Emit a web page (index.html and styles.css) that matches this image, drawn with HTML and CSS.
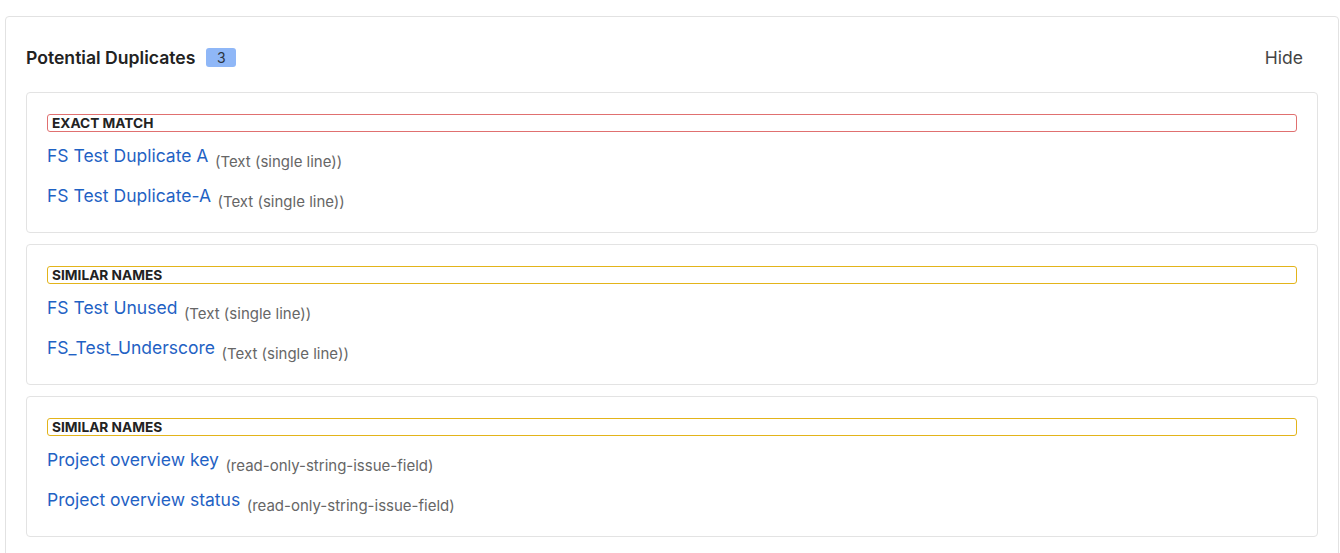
FILE: index.html
```html
<!DOCTYPE html>
<html lang="en">
	<head>
		<meta charset="UTF-8" />
		<meta name="viewport" content="width=device-width, initial-scale=1.0" />
		<title>Potential Duplicates</title>
		<link rel="stylesheet" href="styles.css">
	</head>
	<body>
		<div class="panel">
			<div class="panel-header">
				<div class="panel-title">
					<h2>Potential Duplicates</h2>
					<span class="count">3</span>
				</div>
				<a class="hide-link" href="#">Hide</a>
			</div>

			<div class="group">
				<div class="group-label exact">EXACT MATCH</div>
				<div class="field-row">
					<a href="#">FS Test Duplicate A</a>
					<span class="field-type">(Text (single line))</span>
				</div>
				<div class="field-row">
					<a href="#">FS Test Duplicate-A</a>
					<span class="field-type">(Text (single line))</span>
				</div>
			</div>

			<div class="group">
				<div class="group-label similar">SIMILAR NAMES</div>
				<div class="field-row">
					<a href="#">FS Test Unused</a>
					<span class="field-type">(Text (single line))</span>
				</div>
				<div class="field-row">
					<a href="#">FS_Test_Underscore</a>
					<span class="field-type">(Text (single line))</span>
				</div>
			</div>

			<div class="group">
				<div class="group-label similar">SIMILAR NAMES</div>
				<div class="field-row">
					<a href="#">Project overview key</a>
					<span class="field-type">(read-only-string-issue-field)</span>
				</div>
				<div class="field-row">
					<a href="#">Project overview status</a>
					<span class="field-type">(read-only-string-issue-field)</span>
				</div>
			</div>
		</div>
	</body>
</html>
```

FILE: styles.css
```css
/* base */
body,
html {
	margin: 0;
	padding: 0;
	background-color: #ffffff;
	font-family: Inter, "Liberation Sans", Arial, sans-serif;
	color: #222;
}

body {
	padding: 16px 1px 0 5px;
}

/* panel */
.panel {
	background: #fff;
	border: 1px solid #e2e2e2;
	border-radius: 4px;
	padding: 20px;
}

.panel-header {
	display: flex;
	justify-content: space-between;
	align-items: center;
	height: 40px;
	margin-bottom: 15px;
}

.panel-title {
	display: flex;
	align-items: center;
	gap: 11px;
}

.panel-title h2 {
	margin: 0;
	font-size: 17.6px;
	font-weight: 600;
	color: #222;
}

.count {
	display: inline-block;
	background-color: #8fb7f7;
	color: #2b3440;
	font-size: 14px;
	line-height: 19px;
	padding: 0 10.5px;
	border-radius: 3px;
}

.hide-link {
	font-size: 17.5px;
	color: #444;
	text-decoration: none;
	margin-right: 15px;
}

/* groups */
.group {
	border: 1px solid #e3e3e3;
	border-radius: 4px;
	padding: 21px 20px 16px 20px;
	margin-bottom: 11px;
}

.group-label {
	font-size: 13.7px;
	font-weight: 700;
	line-height: 16px;
	padding: 0 4px;
	border: 1px solid;
	border-radius: 3px;
	color: #222;
	margin-bottom: 4px;
}

.group-label.exact {
	border-color: #e07070;
}

.group-label.similar {
	border-color: #e3b41a;
}

.field-row {
	height: 40px;
	line-height: 40px;
	white-space: nowrap;
}

.field-row a {
	font-size: 17.5px;
	color: #1f62c4;
	text-decoration: none;
}

.field-type {
	font-size: 15px;
	color: #666;
	margin-left: 2px;
	vertical-align: -5px;
}
```
